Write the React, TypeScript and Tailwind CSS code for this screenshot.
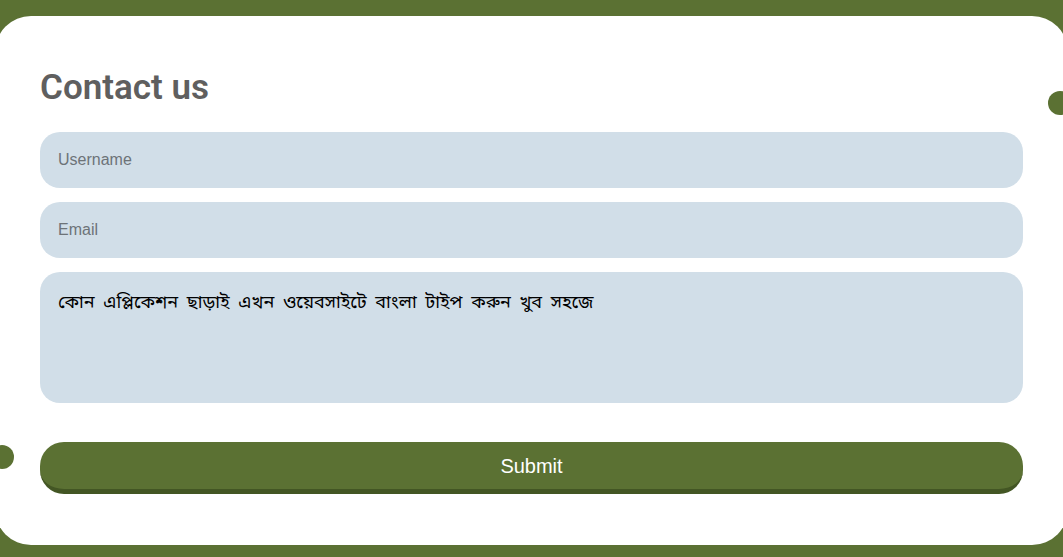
import { useState } from 'react';

// Decorative dots sitting on the card edge
function Dot({ className }: { className: string }) {
  return <span className={`absolute h-6 w-6 rounded-full bg-[#5b7133] ${className}`} />;
}

export default function App() {
  const [message, setMessage] = useState('কোন এপ্লিকেশন ছাড়াই এখন ওয়েবসাইটে বাংলা টাইপ করুন খুব সহজে');

  return (
    <div className="relative h-[557px] overflow-hidden bg-[#5b7133] pt-4 font-['Liberation_Sans',Arial,sans-serif]">
      <div className="-mx-[5px] h-[529px] rounded-[36px] bg-white pl-[45px] pr-[45px] pt-[54px]">
        <h1 className="font-['Roboto',sans-serif] text-[35px] font-semibold leading-[35px] text-[#5f5f5f]">
          Contact us
        </h1>

        <form className="mt-[27px] flex flex-col" onSubmit={(e) => e.preventDefault()}>
          <input
            type="text"
            placeholder="Username"
            className="h-14 rounded-[20px] bg-[#d1dee8] px-[18px] text-base text-black outline-none placeholder:text-[#6d7378]"
          />
          <input
            type="email"
            placeholder="Email"
            className="mt-[14px] h-14 rounded-[20px] bg-[#d1dee8] px-[18px] text-base text-black outline-none placeholder:text-[#6d7378]"
          />
          <textarea
            value={message}
            onChange={(e) => setMessage(e.target.value)}
            className="mt-[14px] h-[131px] resize-none rounded-[20px] bg-[#d1dee8] px-[18px] pt-[18px] font-['Noto_Sans_Bengali','Noto_Sans',sans-serif] text-[18px] text-black outline-none [word-spacing:4px]"
          />
          <button
            type="submit"
            className="mt-[39px] h-[52px] rounded-[24px] border-b-[5px] border-[#435624] bg-[#5b7133] text-[20px] text-white"
          >
            Submit
          </button>
        </form>
      </div>

      <Dot className="left-[1048px] top-[91px]" />
      <Dot className="-left-[10px] top-[445px]" />
    </div>
  );
}
